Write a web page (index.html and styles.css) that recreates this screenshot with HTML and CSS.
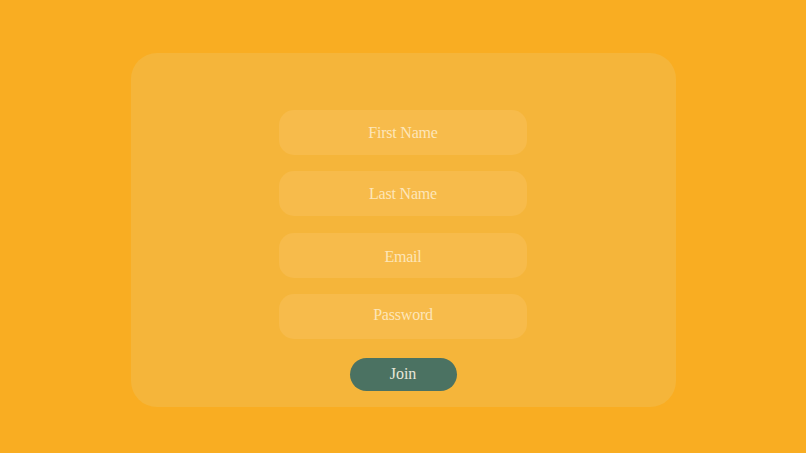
FILE: index.html
```html
<!DOCTYPE html>
<html>
<head>
<meta charset="utf-8">
<link rel="stylesheet" href="styles.css">
</head>
<body>
<div class="page">
  <form class="card">
    <div class="field">First Name</div>
    <div class="field">Last Name</div>
    <div class="field">Email</div>
    <div class="field field-low">Password</div>
    <button type="button" class="join">Join</button>
  </form>
</div>
</body>
</html>
```
FILE: styles.css
```css
html, body {
  margin: 0;
  padding: 0;
  background: #f9ad22;
  font-family: "Liberation Serif", "Times New Roman", serif;
}
.page {
  width: 806px;
  height: 453px;
  padding-top: 53px;
  box-sizing: border-box;
  display: flex;
  justify-content: center;
  align-items: flex-start;
}
.card {
  margin: 0;
  width: 545px;
  height: 354px;
  box-sizing: border-box;
  background: #f5b53a;
  border-radius: 26px;
  padding-top: 57px;
  display: flex;
  flex-direction: column;
  align-items: center;
}
.field {
  width: 248px;
  height: 45px;
  border-radius: 15px;
  background: #f7bb4b;
  color: #fde6b9;
  font-size: 16px;
  letter-spacing: -0.2px;
  display: flex;
  align-items: center;
  justify-content: center;
  margin-bottom: 16px;
  flex-shrink: 0;
}
.field:nth-child(3) {
  margin-top: 1px;
  padding-top: 2px;
  box-sizing: border-box;
}
.field-low {
  padding-bottom: 4px;
  box-sizing: border-box;
}
.join {
  margin-top: 3px;
  width: 107px;
  height: 33px;
  border: none;
  border-radius: 17px;
  background: #4b7262;
  color: #e8e7d9;
  font-family: "Liberation Serif", "Times New Roman", serif;
  font-size: 16px;
  padding: 0 0 2px;
}
```
